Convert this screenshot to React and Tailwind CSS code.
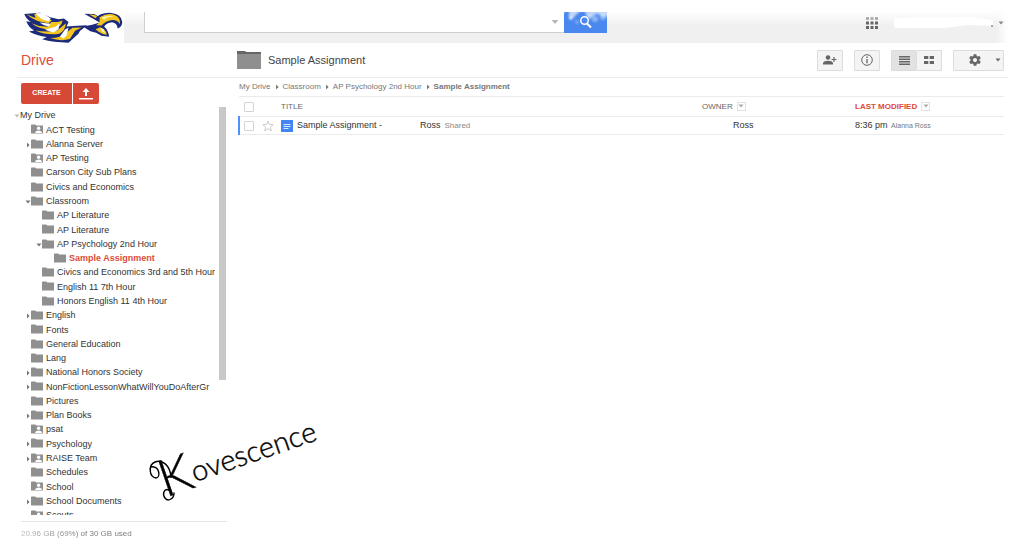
import clsx from 'clsx';

const TREE = [
  { name: 'My Drive', level: 0, caret: 'open' },
  { name: 'ACT Testing', level: 1, shared: true },
  { name: 'Alanna Server', level: 1, caret: 'closed' },
  { name: 'AP Testing', level: 1, shared: true },
  { name: 'Carson City Sub Plans', level: 1 },
  { name: 'Civics and Economics', level: 1 },
  { name: 'Classroom', level: 1, caret: 'open' },
  { name: 'AP Literature', level: 2 },
  { name: 'AP Literature', level: 2 },
  { name: 'AP Psychology 2nd Hour', level: 2, caret: 'open' },
  { name: 'Sample Assignment', level: 3, active: true },
  { name: 'Civics and Economics 3rd and 5th Hour', level: 2 },
  { name: 'English 11 7th Hour', level: 2 },
  { name: 'Honors English 11 4th Hour', level: 2 },
  { name: 'English', level: 1, caret: 'closed' },
  { name: 'Fonts', level: 1 },
  { name: 'General Education', level: 1 },
  { name: 'Lang', level: 1 },
  { name: 'National Honors Society', level: 1, caret: 'closed' },
  { name: 'NonFictionLessonWhatWillYouDoAfterGr', level: 1, caret: 'closed' },
  { name: 'Pictures', level: 1 },
  { name: 'Plan Books', level: 1, caret: 'closed' },
  { name: 'psat', level: 1, shared: true },
  { name: 'Psychology', level: 1, caret: 'closed' },
  { name: 'RAISE Team', level: 1, caret: 'closed', shared: true },
  { name: 'Schedules', level: 1 },
  { name: 'School', level: 1, shared: true },
  { name: 'School Documents', level: 1, caret: 'closed' },
  { name: 'Scouts', level: 1, shared: true },
];

const CRUMBS = ['My Drive', 'Classroom', 'AP Psychology 2nd Hour'];

const INDENT = ['pl-[14px]', 'pl-[25px]', 'pl-[36px]', 'pl-[48px]'];

const toolBtn =
  'flex h-[21px] items-center justify-center rounded-[1px] border border-[#dcdcdc] text-[#666]';

function Caret({ open, className }) {
  return (
    <svg viewBox="0 0 6 6" className={clsx(className || 'h-[6px] w-[6px]')} fill="currentColor" aria-hidden="true">
      <path d={open ? 'M0.5 1.5h5L3 4.5z' : 'M2 0.5v5L4.6 3z'} />
    </svg>
  );
}

function FolderIcon({ shared }) {
  return (
    <svg viewBox="0 0 12 10" className="mb-[2px] h-[10px] w-[12px] shrink-0" fill="#8f8f8f" aria-hidden="true">
      <path d="M0 1.2Q0 .5.7.5H4.2L5.4 1.6H12V9.5H0z" />
      {shared && (
        <g fill="#fff">
          <circle cx="7.6" cy="4.2" r="1.7" />
          <path d="M4.3 9V8Q5 6.400 7.600 6.400T10.900 8V9z" />
        </g>
      )}
    </svg>
  );
}

function EagleLogo() {
  return (
    <svg viewBox="60 36 310 94" className="h-[31px] w-[103px]" aria-label="Eagles" role="img">
      <rect x="60" y="36" width="310" height="94" fill="#fff" />
      {/* wing, dark base first and the feathers over it */}
      <path
        d="M72 42L120 38L150 52L176 58L192 56L206 66L200 80L232 78L262 76L250 86Q240 92 236 102L206 129Q160 129 126 119L140 112Q110 108 86 95L102 92Q84 82 78 64L92 66Q76 56 72 42z"
        fill="#1c2a7c"
      />
      <path d="M78 43L106 54L102 42L122 41Q134 58 156 60L146 70Q108 68 78 43z" fill="#f3c51d" />
      <path d="M94 70Q118 82 144 80L154 66L174 66L188 62Q184 82 164 88Q120 92 94 70z" fill="#f3c51d" />
      <path d="M106 92Q140 98 172 92L198 70Q196 92 178 102Q140 108 106 92z" fill="#f3c51d" />
      <path d="M150 115Q186 114 200 98L218 84L246 83L226 93L210 118Q182 126 150 115z" fill="#f3c51d" />
      <path d="M106 40L128 39L152 56L146 64Q120 60 106 40z" fill="#fff" />
      <path d="M118 68L152 72L146 80Q130 78 118 68zM134 90L168 80L178 70L176 88L160 98z" fill="#fff" />
      <path d="M180 110L196 88L206 84L200 108L190 116z" fill="#fff" />
      {/* brow and eye */}
      <path d="M254 41L284 42L304 54L292 62L272 52z" fill="#1c2a7c" />
      <path d="M268 43L286 45L297 52L288 55z" fill="#f3c51d" />
      {/* beak */}
      <path
        d="M284 58Q304 36 336 39Q366 42 369 66Q369 80 355 86Q354 70 338 67Q322 68 314 80Q327 92 329 111L306 108Q290 96 272 94L250 80L278 75L300 68z"
        fill="#1c2a7c"
      />
      <path d="M300 52Q326 37 346 45Q364 53 362 73Q352 57 334 61Q318 64 306 77L290 76Q304 66 300 52z" fill="#f3c51d" />
      <path d="M302 82L312 87Q321 95 322 105Q302 102 288 88z" fill="#f3c51d" />
      <path d="M303 84L312 90Q316 96 316 100Q304 94 303 84z" fill="#fff" />
      <path d="M306 53Q324 43 344 50Q326 50 314 60z" fill="#fdf1a6" />
    </svg>
  );
}

function Signature() {
  return (
    <svg
      viewBox="0 0 190 95"
      className="pointer-events-none absolute top-[415px] left-[140px] h-[95px] w-[190px] overflow-visible"
    >
      <g transform="rotate(-19 38 70)">
        <text x="22" y="78" className="font-[Lato] font-light" fontSize="52" fill="#000" stroke="#000" strokeWidth="0.4">
          K
          <tspan fontSize="29" dy="-5">
            ovescence
          </tspan>
        </text>
      </g>
      {/* curls around the initial */}
      <g fill="none" stroke="#000" strokeWidth="1.4" strokeLinecap="round">
        <path d="M31 62C30 50 22 44 15 47C8 50 9 62 16 63C21 62 19 53 14 52C11 51 10 53 10 54" />
        <path d="M34 78C34 84 28 87 25 83C22 79 24 73 29 75" />
      </g>
    </svg>
  );
}

function Header() {
  return (
    <header className="mr-[16px] flex h-[43px] items-end bg-linear-to-b from-white from-25% to-[#f0f0f0] to-60%">
      <div className="flex w-[124px] shrink-0 justify-end self-stretch bg-white pt-[12px] pr-[1px]">
        <EagleLogo />
      </div>
      <form className="mb-[10px] ml-[20px] flex h-[21px] min-w-0 flex-1">
        <div className="flex min-w-0 flex-1 items-center border-b border-l border-[#cfcfcf] bg-white pr-[5px]">
          <input type="text" aria-label="Search Drive" className="h-full min-w-0 flex-1 bg-transparent px-2 text-[11px] outline-none" />
          <button type="button" aria-label="Search options" className="text-[#b5b5b5]">
            <Caret open className="h-[8px] w-[8px]" />
          </button>
        </div>
        <button type="button" aria-label="Search" className="h-[21px] w-[43px] bg-[#4a87ee]">
          <svg viewBox="0 0 43 21" className="h-[21px] w-[43px]" fill="none">
            <defs>
              <filter id="soft">
                <feGaussianBlur stdDeviation="1" />
              </filter>
            </defs>
            <g fill="#fff" filter="url(#soft)">
              <path d="M-2 -2H45V3Q40 6 36 3T28 5T22 2T12 3T5 2T-2 3z" opacity=".65" />
              <circle cx="7" cy="6" r="1.6" />
              <circle cx="13" cy="10" r="2" opacity=".3" />
              <circle cx="31" cy="7" r="3" opacity=".4" />
              <circle cx="39" cy="5" r="3" opacity=".4" />
            </g>
            <circle cx="20.500" cy="8.500" r="3.700" stroke="#fff" strokeWidth="1.500" />
            <path d="M23 11.500L27 15.500" stroke="#fff" strokeWidth="2" />
          </svg>
        </button>
      </form>
      <div className="flex h-full w-[401px] shrink-0 items-center justify-end bg-linear-to-r from-transparent from-97% to-white pt-[2px] pr-[4px]">
        <button type="button" aria-label="Apps" className="mr-[16px]">
          <svg viewBox="0 0 12 12" className="h-[12px] w-[12px]" fill="#666">
            <path d="M0 0h3v3H0zM4.500 0h3v3h-3zM9 0h3v3H9z" opacity=".5" />
            <path d="M0 4.500h3v3H0zM4.500 4.500h3v3h-3zM9 4.500h3v3H9zM0 9h3v3H0zM4.500 9h3v3h-3zM9 9h3v3H9z" />
          </svg>
        </button>
        <button type="button" aria-label="Account" className="flex items-center gap-[5px] text-[#888]">
          <svg viewBox="0 0 99 12" className="h-[12px] w-[99px]">
            <path d="M0 2Q0 0 4 1L78 0L99 3V9L74 8L50 11L4 11Q0 11 0 9z" fill="#fff" />
            <path d="M97 9h2" stroke="#555" />
          </svg>
          <Caret open />
        </button>
      </div>
    </header>
  );
}

function TreeRow({ item }) {
  return (
    <li className={clsx('flex min-h-0 items-center', INDENT[item.level])}>
      {item.caret ? (
        <button
          type="button"
          aria-label={'Toggle ' + item.name}
          className={clsx('w-[6px] shrink-0', item.level === 0 ? 'text-[#bbb]' : 'text-[#777]')}
        >
          <Caret open={item.caret === 'open'} />
        </button>
      ) : (
        <span className="w-[6px] shrink-0" />
      )}
      <a
        href="#"
        className={clsx(
          'flex items-center gap-[3px] whitespace-nowrap',
          item.active ? 'font-bold text-[#dd4b39]' : 'text-[#333]',
        )}
      >
        {item.level > 0 && <FolderIcon shared={item.shared} />}
        {item.name}
      </a>
    </li>
  );
}

function Sidebar() {
  return (
    <aside className="w-[238px] shrink-0">
      <div className="flex gap-[1px] pt-[5px] pl-[21px] text-white">
        <button type="button" className="h-[21px] w-[51px] rounded-l-[2px] bg-[#d74937] text-[7px] font-bold">
          CREATE
        </button>
        <button type="button" aria-label="Upload" className="flex h-[21px] w-[26px] items-center justify-center rounded-r-[2px] bg-[#d74937]">
          <svg viewBox="0 0 14 12" className="h-[12px] w-[14px]" fill="#fff">
            <path d="M7 0L10.500 4H8V8H6V4H3.500zM0 10h14v1.500H0z" />
          </svg>
        </button>
      </div>
      <div className="mt-[3px] flex h-[408px] w-[226px]">
        <div className="mt-[2px] min-w-0 flex-1 overflow-hidden">
          <ul className="grid h-[414px] w-[215px] auto-rows-fr overflow-hidden text-[9px]">
            {TREE.map((item, i) => (
              <TreeRow key={i} item={item} />
            ))}
          </ul>
        </div>
        <div className="h-[273px] w-[7px] bg-[#c8c8c8]" />
      </div>
      <p className="mt-[6px] mr-[11px] ml-[21px] border-t border-[#e5e5e5] bg-linear-to-r from-[#bbb] to-[#777] to-30% bg-clip-text pt-[6px] text-[8px] leading-[12px] text-transparent">
        20.96 GB (69%) of 30 GB used
      </p>
    </aside>
  );
}

function SortButton({ label }) {
  return (
    <button
      type="button"
      aria-label={label}
      className="ml-[4px] inline-flex h-[9px] w-[9px] items-center justify-center border border-[#e2e2e2] align-middle text-[#aaa]"
    >
      <Caret open />
    </button>
  );
}

function Checkbox({ label }) {
  return (
    <input
      type="checkbox"
      aria-label={label}
      className="block h-[10px] w-[10px] appearance-none rounded-[1px] border border-[#d4d4d4] bg-white"
    />
  );
}

function FileTable() {
  return (
    <table className="w-full table-fixed border-collapse text-left text-[#333]">
      <colgroup>
        <col className="w-[23px]" />
        <col className="w-[19px]" />
        <col />
        <col className="w-[20%]" />
        <col className="w-[149px]" />
      </colgroup>
      <thead>
        <tr className="h-[20px] border-y border-[#ebebeb] text-[8px] text-[#666]">
          <th className="pl-[5px]">
            <Checkbox label="Select all" />
          </th>
          <th />
          <th className="font-normal">TITLE</th>
          <th className="font-normal">
            OWNER
            <SortButton label="Owner options" />
          </th>
          <th className="text-[#dd4b39]">
            LAST MODIFIED
            <SortButton label="Sort options" />
          </th>
        </tr>
      </thead>
      <tbody>
        <tr className="h-[18px] border-b border-[#ebebeb] text-[9px]">
          <td className="border-l-2 border-[#4d90fe] pl-[4px]">
            <Checkbox label="Select Sample Assignment" />
          </td>
          <td>
            <button type="button" aria-label="Star" className="block">
              <svg viewBox="0 0 12 12" className="h-[12px] w-[12px]" fill="#fff" stroke="#ccc">
                <path d="M6 1L7.400 4.500L11.200 4.700L8.300 7.100L9.300 10.800L6 8.700L2.700 10.800L3.700 7.100L.8 4.700L4.600 4.500z" />
              </svg>
            </button>
          </td>
          <td>
            <div className="flex items-center">
              <svg viewBox="0 0 12 12" className="mr-[4px] h-[12px] w-[12px]" aria-hidden="true">
                <path d="M0 0h12v12H0z" fill="#4285f4" />
                <path d="M2.500 4.500h7M2.500 6.500h7M2.500 8.500h5" stroke="#dbe8ff" />
              </svg>
              <a href="#" className="w-[123px]">
                Sample Assignment -
              </a>
              <span>Ross</span>
              <span className="ml-[4px] text-[8px] text-[#888]">Shared</span>
            </div>
          </td>
          <td className="pl-[31px]">Ross</td>
          <td>
            8:36 pm <span className="ml-[1px] text-[7px] text-[#777]">Alanna Ross</span>
          </td>
        </tr>
      </tbody>
    </table>
  );
}

export default function App() {
  return (
    <div className="relative min-h-screen overflow-hidden bg-white font-['Liberation_Sans',Arial,sans-serif]">
      <Header />
      <div className="mr-[16px] ml-[17px] flex h-[35px] items-center border-b border-[#ebebeb] pr-[4px] pl-[4px]">
        <h1 className="w-[216px] shrink-0 text-[14px] text-[#dd4b39]">Drive</h1>
        <svg viewBox="0 0 24 18" className="mr-[7px] h-[18px] w-[24px]" aria-hidden="true">
          <path d="M0 0H8L9 1H24V18H0z" fill="#8f8f8f" />
          <path d="M0 0H8L9 1H24V3H0z" fill="#666" />
        </svg>
        <h2 className="text-[11px] text-[#444]">Sample Assignment</h2>
        <div className="ml-auto flex gap-[11px]">
          <button type="button" aria-label="Share" className={clsx(toolBtn, 'w-[26px] bg-[#f4f4f4]')}>
            <svg viewBox="0 0 14 10" className="h-[10px] w-[14px]" fill="currentColor">
              <circle cx="5" cy="2.500" r="2.300" />
              <path d="M0 9.500V8Q1 5.800 5 5.800T10 8V9.500zM10.400 2h1.200v1.900h1.900v1.200h-1.900V7h-1.200V5.100H8.500V3.900h1.900z" />
            </svg>
          </button>
          <button type="button" aria-label="Details" className={clsx(toolBtn, 'w-[26px] bg-[#f4f4f4]')}>
            <svg viewBox="0 0 12 12" className="h-[12px] w-[12px]" fill="none" stroke="currentColor">
              <circle cx="6" cy="6" r="5.300" />
              <path d="M6 2.600v1.400M6 5v4.200" strokeWidth="1.300" />
            </svg>
          </button>
          <div className="flex">
            <button type="button" aria-label="List view" className={clsx(toolBtn, 'w-[26px] bg-[#e2e2e2]')}>
              <svg viewBox="0 0 11 9" className="h-[9px] w-[11px]" fill="currentColor">
                <path d="M0 0h11v1.400H0zM0 2.500h11v1.400H0zM0 5h11v1.400H0zM0 7.500h11v1.400H0z" />
              </svg>
            </button>
            <button type="button" aria-label="Grid view" className={clsx(toolBtn, 'w-[25px] border-l-0 bg-[#f4f4f4]')}>
              <svg viewBox="0 0 10 8" className="h-[8px] w-[10px]" fill="currentColor">
                <path d="M0 0h4.300v3H0zM5.700 0H10v3H5.700zM0 5h4.300v3H0zM5.700 5H10v3H5.700z" />
              </svg>
            </button>
          </div>
          <button type="button" aria-label="Settings" className={clsx(toolBtn, 'w-[51px] gap-[13px] bg-[#f4f4f4] pl-[12px]')}>
            <svg viewBox="0 0 24 24" className="h-[14px] w-[14px]" fill="currentColor">
              <path d="M19.430 12.980c.04-.32.070-.64.070-.98s-.03-.66-.07-.98l2.110-1.650c.19-.15.240-.42.120-.64l-2-3.460c-.12-.22-.39-.3-.61-.22l-2.490 1c-.52-.4-1.080-.73-1.690-.98l-.38-2.650C14.460 2.180 14.250 2 14 2h-4c-.25 0-.46.180-.49.420l-.38 2.650c-.61.250-1.170.590-1.690.980l-2.490-1c-.23-.09-.49 0-.61.220l-2 3.460c-.13.220-.07.490.12.640l2.110 1.650c-.04.320-.07.650-.07.980s.03.660.070.980l-2.110 1.650c-.19.150-.24.420-.12.640l2 3.460c.12.220.390.300.610.220l2.490-1c.52.400 1.080.730 1.690.980l.38 2.650c.03.240.240.420.490.420h4c.25 0 .46-.18.490-.42l.38-2.650c.61-.25 1.170-.59 1.690-.98l2.490 1c.23.090.490 0 .610-.22l2-3.460c.12-.22.070-.49-.12-.64l-2.110-1.650zM12 15.500c-1.930 0-3.500-1.570-3.500-3.500s1.570-3.500 3.500-3.500 3.500 1.570 3.500 3.500-1.570 3.500-3.500 3.500z" />
            </svg>
            <Caret open />
          </button>
        </div>
      </div>
      <div className="flex">
        <Sidebar />
        <main className="mr-[20px] min-w-0 flex-1">
          <nav aria-label="Breadcrumb" className="flex h-[18px] items-center gap-[3px] pl-[1px] text-[8px] text-[#777]">
            {CRUMBS.map((crumb) => (
              <span key={crumb} className="flex items-center gap-[3px]">
                <a href="#">{crumb}</a>
                <Caret />
              </span>
            ))}
            <span className="font-bold" aria-current="page">
              Sample Assignment
            </span>
          </nav>
          <FileTable />
        </main>
      </div>
      <Signature />
    </div>
  );
}
